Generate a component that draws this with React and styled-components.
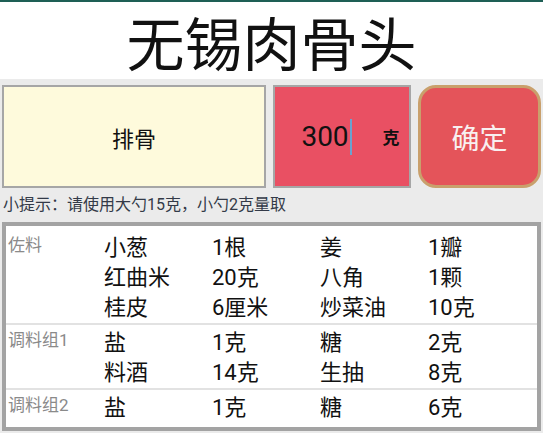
import React from 'react';
import styled, { createGlobalStyle } from 'styled-components';

const GlobalStyle = createGlobalStyle`
  html, body {
    margin: 0;
    padding: 0;
    background: #ffffff;
  }
  body {
    font-family: "Roboto", "Noto Sans CJK SC", sans-serif;
    color: #111;
  }
`;

const Screen = styled.div`
  width: 543px;
  height: 433px;
  display: flex;
  flex-direction: column;
  overflow: hidden;
`;

const TopBar = styled.div`
  height: 2px;
  background: #1e5f55;
`;

const Title = styled.h1`
  margin: 0;
  height: 77px;
  display: flex;
  align-items: center;
  justify-content: center;
  font-size: 58px;
  font-weight: 400;
  color: #111;
`;

const Panel = styled.div`
  flex: 1;
  background: #ebebeb;
  padding: 6px 2px 2px 2px;
  display: flex;
  flex-direction: column;
`;

const InputRow = styled.div`
  display: flex;
  gap: 7px;
  height: 103px;
`;

const NameBox = styled.div`
  box-sizing: border-box;
  width: 264px;
  border: 2px solid #a6a6a6;
  background: #fefadc;
  display: flex;
  align-items: center;
  justify-content: center;
  font-size: 22px;
  color: #111;
`;

const WeightBox = styled.div`
  box-sizing: border-box;
  width: 138px;
  border: 2px solid #a6a6a6;
  background: #e95063;
  display: flex;
  align-items: center;
`;

const ValueField = styled.div`
  flex: 1;
  display: flex;
  align-items: center;
  justify-content: center;
  padding-left: 5px;
  font-size: 28px;
  color: #111;
`;

const Cursor = styled.span`
  width: 2px;
  height: 36px;
  margin-left: 1px;
  background: #6ba2d0;
`;

const Unit = styled.div`
  width: 36px;
  text-align: center;
  font-size: 17px;
  font-weight: 700;
  color: #111;
`;

const ConfirmButton = styled.button`
  box-sizing: border-box;
  width: 123px;
  height: 103px;
  border: 3px solid #c9a06c;
  border-radius: 18px;
  background: #e4545a;
  color: #f8f0f0;
  font-family: inherit;
  font-size: 28px;
  padding: 0;
`;

const Hint = styled.div`
  height: 34px;
  line-height: 34px;
  padding-left: 1px;
  font-size: 16px;
  color: #333a48;
`;

const Table = styled.div`
  box-sizing: border-box;
  flex: 1;
  border: 4px solid #a3a3a3;
  background: #ffffff;
  padding: 4px 0;
  display: flex;
  flex-direction: column;
`;

const Group = styled.div`
  display: grid;
  grid-template-columns: 98px 1fr;
  padding-top: 3px;
`;

const Separator = styled.div`
  height: 2px;
  background: #e2e2e2;
`;

const GroupLabel = styled.div`
  padding-left: 2px;
  font-size: 17px;
  line-height: 24px;
  color: #8a8a8a;
`;

const ItemGrid = styled.div`
  display: grid;
  grid-template-columns: repeat(4, 108px);
  grid-auto-rows: 30px;
`;

const Cell = styled.div`
  font-size: 22px;
  line-height: 30px;
  color: #111;
  white-space: nowrap;
`;

const groups = [
  {
    label: '佐料',
    items: [
      ['小葱', '1根', '姜', '1瓣'],
      ['红曲米', '20克', '八角', '1颗'],
      ['桂皮', '6厘米', '炒菜油', '10克'],
    ],
  },
  {
    label: '调料组1',
    items: [
      ['盐', '1克', '糖', '2克'],
      ['料酒', '14克', '生抽', '8克'],
    ],
  },
  {
    label: '调料组2',
    items: [['盐', '1克', '糖', '6克']],
  },
];

const App = () => {
  return (
    <>
      <GlobalStyle />
      <Screen>
        <TopBar />
        <Title>无锡肉骨头</Title>
        <Panel>
          <InputRow>
            <NameBox>排骨</NameBox>
            <WeightBox>
              <ValueField>
                300
                <Cursor />
              </ValueField>
              <Unit>克</Unit>
            </WeightBox>
            <ConfirmButton>确定</ConfirmButton>
          </InputRow>
          <Hint>小提示：请使用大勺15克，小勺2克量取</Hint>
          <Table>
            {groups.map((group, i) => (
              <React.Fragment key={group.label}>
                {i > 0 && <Separator />}
                <Group>
                  <GroupLabel>{group.label}</GroupLabel>
                  <ItemGrid>
                    {group.items.flat().map((text, j) => (
                      <Cell key={j}>{text}</Cell>
                    ))}
                  </ItemGrid>
                </Group>
              </React.Fragment>
            ))}
          </Table>
        </Panel>
      </Screen>
    </>
  );
};

export default App;
